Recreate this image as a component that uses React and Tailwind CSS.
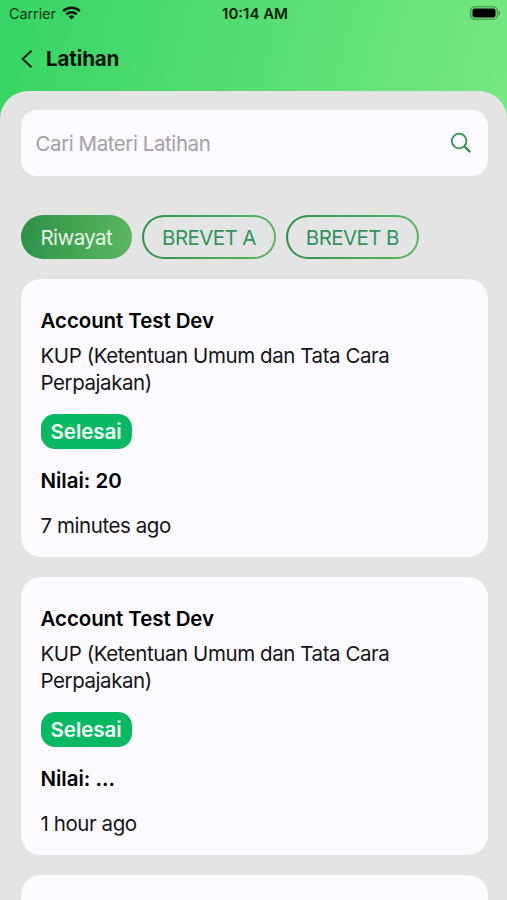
import { useState } from "react"

const tabs = ["Riwayat", "BREVET A", "BREVET B"]

const histories = [
    { id: 1, name: "Account Test Dev", title: "KUP (Ketentuan Umum dan Tata Cara Perpajakan)", status: "Selesai", score: "20", time: "7 minutes ago" },
    { id: 2, name: "Account Test Dev", title: "KUP (Ketentuan Umum dan Tata Cara Perpajakan)", status: "Selesai", score: "...", time: "1 hour ago" },
]

function StatusBar() {
    return (
        <div className="grid grid-cols-3 items-center h-7 pl-[9px] pr-[6px] text-[14.5px] text-[#0b3a1a]">
            <div className="flex items-center gap-[6px]">
                <span className="tracking-[-0.1px]">Carrier</span>
                <svg className="-mt-[2px]" width="19" height="14" viewBox="0 0 19 14" fill="none" stroke="#06150a" strokeWidth="2.5">
                    <path d="M1.2 5.1a11.8 11.8 0 0 1 16.6 0" />
                    <path d="M4.3 8.3a7.4 7.4 0 0 1 10.4 0" />
                    <path d="M9.5 13.6 6.6 10.6a4.1 4.1 0 0 1 5.8 0z" fill="#06150a" stroke="none" />
                </svg>
            </div>
            <span className="text-center text-[15px] font-semibold whitespace-nowrap text-[#06210e]">10:14 AM</span>
            <svg className="justify-self-end -mt-[2px]" width="31" height="14" viewBox="0 0 31 14">
                <rect x="0.75" y="0.75" width="26.5" height="12.5" rx="3.8" fill="none" stroke="#000" strokeOpacity="0.4" strokeWidth="1.2" />
                <rect x="2.5" y="2.5" width="23" height="9" rx="2" fill="#000" />
                <path d="M28.5 4.8c2.1.8 2.1 3.6 0 4.4z" fill="#000" fillOpacity="0.45" />
            </svg>
        </div>
    )
}

function HistoryCard({ item }) {
    return (
        <div className="flex flex-col items-start h-[278px] shrink-0 rounded-[20px] bg-[#fcfaff] px-5 pt-[28px] text-[20.5px] leading-[27px] tracking-[-0.43px] text-[#151518]">
            <p className="font-semibold tracking-[-0.08px] text-black">{item.name}</p>
            <p className="mt-[8px] w-[370px]">{item.title}</p>
            <span className="mt-[18px] h-[35px] rounded-[14px] bg-[#08b964] px-[10px] leading-[35px] font-semibold tracking-[-0.03px] text-[#f4fff8]">{item.status}</span>
            <p className="mt-[18px] font-semibold tracking-[-0.03px] text-black">Nilai: {item.score}</p>
            <p className="mt-[18px]">{item.time}</p>
        </div>
    )
}

function App() {
    const [activeTab, setActiveTab] = useState("Riwayat")
    const [search, setSearch] = useState("")

    return (
        <main className="h-screen w-full overflow-hidden flex flex-col bg-[#e4e4e4] font-['Inter','Liberation_Sans',sans-serif]">
            <header className="h-[131px] -mb-10 shrink-0 bg-linear-[105deg,#36d563_0%,#56de72_50%,#78e980_100%]">
                <StatusBar />
                <div className="flex items-center h-[62px] pl-[21px]">
                    <svg width="12" height="18" viewBox="0 0 12 18" fill="none" stroke="#05190b" strokeWidth="1.9">
                        <path d="M10.5 0.8 1.6 9l8.9 8.2" />
                    </svg>
                    <h1 className="ml-[13px] text-[20.5px] font-bold tracking-[-0.1px] text-[#051108]">Latihan</h1>
                </div>
            </header>
            <section className="flex-1 min-h-0 rounded-t-[28px] bg-[#e4e4e4] pl-[20.5px] pr-[19.5px] pt-[19px]">
                <div className="flex items-center h-[66px] rounded-[16px] bg-[#fcfaff] pl-[15px] pr-4">
                    <input
                        className="flex-1 pt-[2px] text-[20.5px] tracking-[-0.43px] focus:outline-none placeholder:text-[#a3a1a6]"
                        placeholder="Cari Materi Latihan"
                        type="text"
                        value={search}
                        onChange={(e) => setSearch(e.target.value)}
                    />
                    <svg width="22" height="22" viewBox="0 0 22 22" fill="none" stroke="#2f9651">
                        <circle cx="9.1" cy="9" r="7.3" strokeWidth="1.8" />
                        <path d="m14.2 14.1 6 6" strokeWidth="2.4" />
                    </svg>
                </div>
                <div className="flex gap-[10px] mt-[39px]">
                    {tabs.map((tab) => (
                        <button
                            key={tab}
                            onClick={() => setActiveTab(tab)}
                            className="h-[44px] rounded-full bg-linear-[100deg,#2b9149,#5cb85f] p-[2px] text-[20.5px] tracking-[-0.6px] cursor-pointer"
                        >
                            <span
                                className={
                                    activeTab === tab
                                        ? "flex items-center h-full rounded-full px-[18px] pt-[2px] text-[#e6f5e8]"
                                        : "flex items-center h-full rounded-full px-[18px] pt-[2px] bg-[#e4e4e4] text-[#31945b]"
                                }
                            >
                                {tab}
                            </span>
                        </button>
                    ))}
                </div>
                <div className="flex flex-col gap-5 mt-5">
                    {histories.map((item) => (
                        <HistoryCard key={item.id} item={item} />
                    ))}
                    <div className="h-[278px] shrink-0 rounded-[20px] bg-[#fcfaff]" />
                </div>
            </section>
        </main>
    )
}

export default App
